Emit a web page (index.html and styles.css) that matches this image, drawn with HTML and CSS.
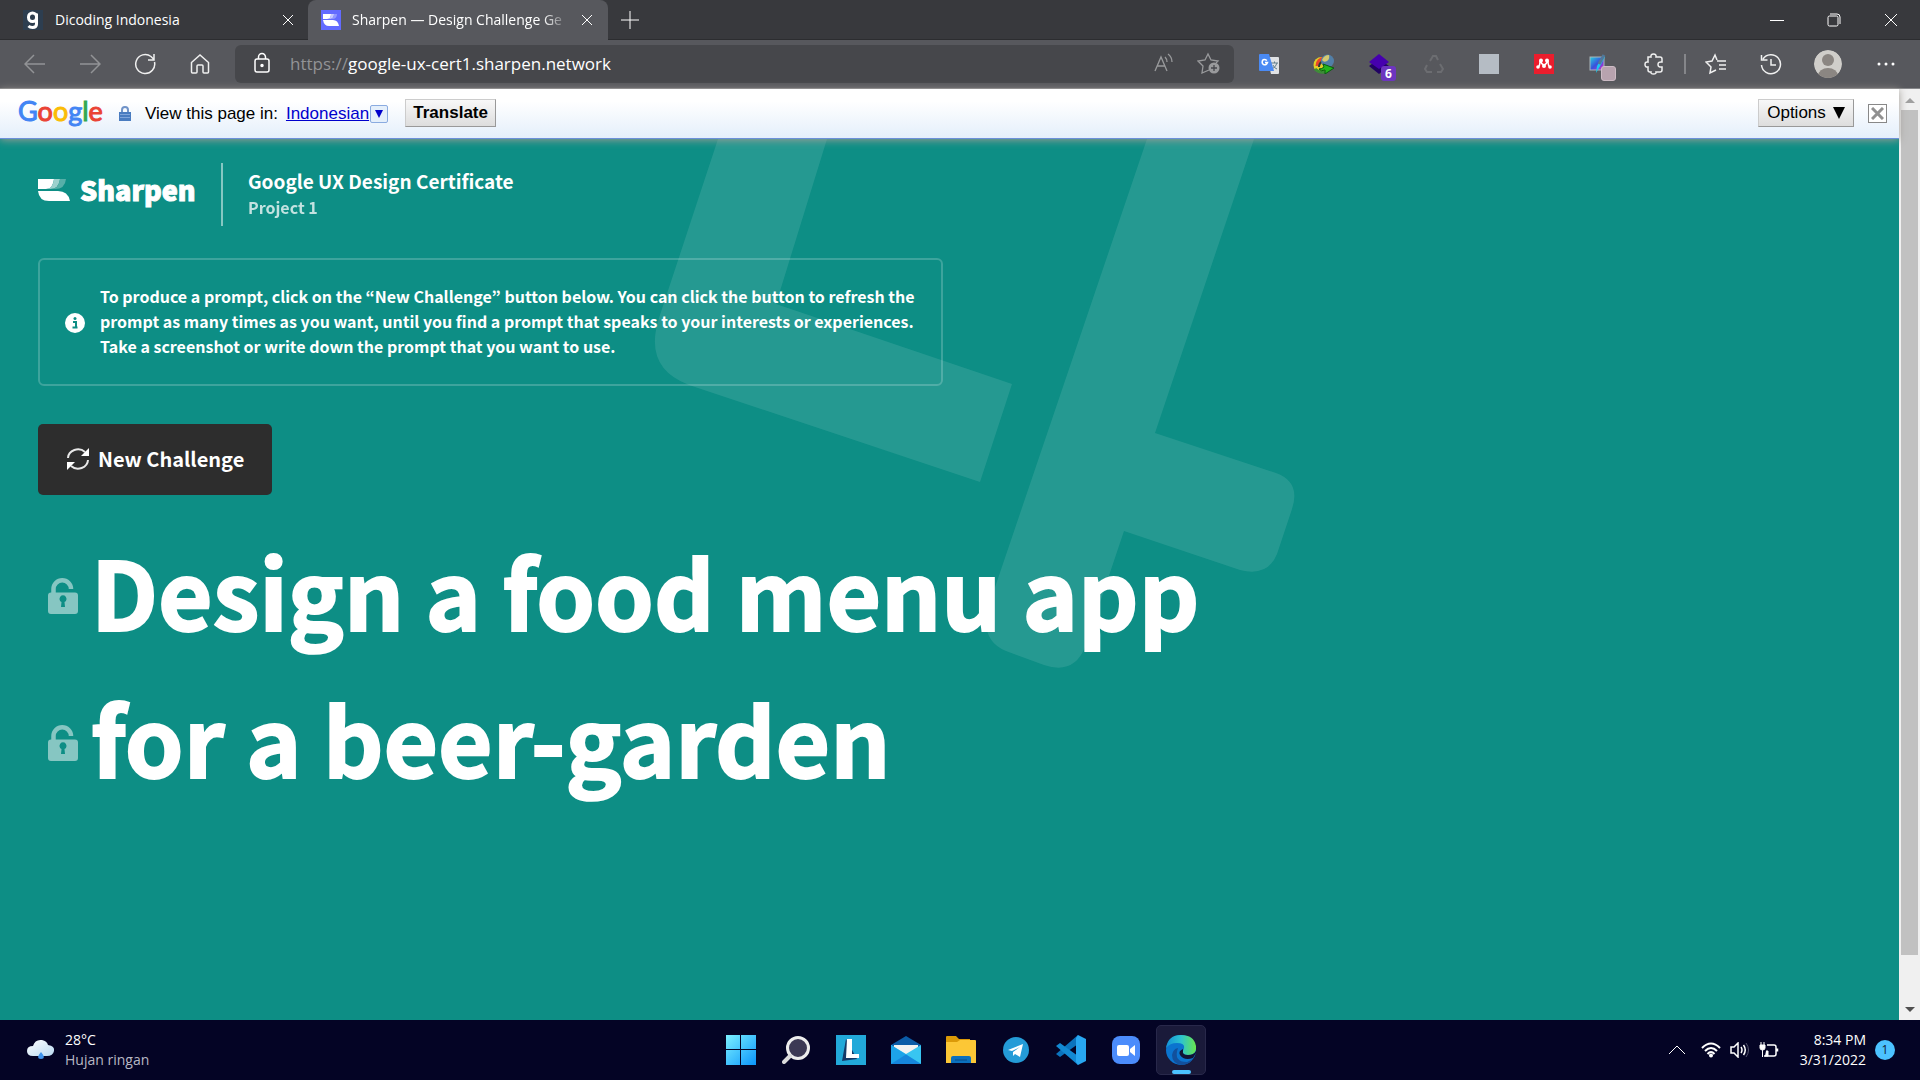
FILE: index.html
```html
<!DOCTYPE html>
<html lang="en">
<head>
<meta charset="utf-8">
<title>Sharpen — Design Challenge Generator</title>
<link rel="stylesheet" href="styles.css">
</head>
<body>
<div class="desktop">

  <header class="tabbar">
    <div class="tab">
      <svg class="favicon" viewBox="0 0 20 20" aria-hidden="true"><rect width="20" height="20" fill="#2d3e50"/><g fill="none" stroke="#fff" stroke-width="3"><rect x="5.500" y="3" width="8" height="8.500" rx="4"/><path d="M13.500 3.500v10.500q0 3.500-4 3.500-2.500 0-4-1.500"/></g></svg>
      <span class="tab-title">Dicoding Indonesia</span>
      <button class="tab-close" aria-label="Close tab"><svg width="12" height="12" viewBox="0 0 12 12"><path d="M1 1l10 10M11 1L1 11"/></svg></button>
    </div>
    <div class="tab tab-active">
      <svg class="favicon" viewBox="0 0 20 20" aria-hidden="true"><rect width="20" height="20" fill="#636bff"/><path d="M2 4h8q0 5-4 5H2z" fill="#fff"/><path d="M10 4h3q0 5-5 5H6q4 0 4-5z" fill="#c7caff"/><path d="M13 4h3q0 5-5 5H8q5 0 5-5z" fill="#9299ff"/><path d="M2 10h10q5 0 6 6H8q-5 0-6-6z" fill="#fff"/></svg>
      <span class="tab-title">Sharpen — Design Challenge Ge</span>
      <button class="tab-close" aria-label="Close tab"><svg width="12" height="12" viewBox="0 0 12 12"><path d="M1 1l10 10M11 1L1 11"/></svg></button>
    </div>
    <button class="new-tab" aria-label="New tab"><svg width="18" height="18" viewBox="0 0 18 18"><path d="M9 0v18M0 9h18"/></svg></button>
    <div class="window-controls">
      <button aria-label="Minimize"><svg width="14" height="14" viewBox="0 0 14 14"><path d="M0 7.500h14"/></svg></button>
      <button aria-label="Restore"><svg width="14" height="14" viewBox="0 0 14 14"><rect x="1" y="3" width="10" height="10" rx="1.500"/><path d="M3 1h7q3 0 3 3v7"/></svg></button>
      <button aria-label="Close"><svg width="14" height="14" viewBox="0 0 14 14"><path d="M1 1l12 12M13 1L1 13"/></svg></button>
    </div>
  </header>

  <nav class="toolbar" aria-label="Browser toolbar">
    <button class="tool dim" aria-label="Back"><svg width="22" height="20" viewBox="0 0 22 20" stroke-width="1.500"><path d="M21 10H1M10 1L1 10l9 9"/></svg></button>
    <button class="tool dim" aria-label="Forward"><svg width="22" height="20" viewBox="0 0 22 20" stroke-width="1.500"><path d="M1 10h20M12 1l9 9-9 9"/></svg></button>
    <button class="tool" aria-label="Refresh"><svg width="22" height="22" viewBox="0 0 22 22" stroke-width="1.500"><path d="M20.500 9a9.500 9.500 0 1 1-3.500-5.500L19.500 6M20 1v6h-6"/></svg></button>
    <button class="tool" aria-label="Home"><svg width="22" height="22" viewBox="0 0 22 22" stroke-width="1.500"><path d="M2.500 9.500L11 2l8.500 7.500V19q0 1-1 1H15q-1 0-1-1v-6q0-1-1-1H9q-1 0-1 1v6q0 1-1 1H3.500q-1 0-1-1z"/></svg></button>
    <form class="address">
      <svg class="address-lock" width="18" height="22" viewBox="0 0 18 22" stroke-width="1.500" aria-hidden="true"><rect x="2" y="7" width="14" height="13" rx="2"/><path d="M5.500 7V5a3.500 3.500 0 0 1 7 0v2"/><circle cx="9" cy="13.500" r="1" fill="#fff"/></svg>
      <label class="scheme" for="url">https://</label>
      <input class="url" id="url" type="text" value="google-ux-cert1.sharpen.network">
      <button class="address-btn" type="button" aria-label="Read aloud"><svg width="20" height="20" viewBox="0 0 20 20" stroke-width="1.300"><path d="M1 18L7 4l6 14M3.500 13h7M11 4q2 2 2 5M14 1q4 3 4 8"/></svg></button>
      <button class="address-btn" type="button" aria-label="Add to favorites"><svg width="24" height="22" viewBox="0 0 24 22" stroke-width="1.300"><path d="M12 18l-7 3 1-7-5-5 7-1 3-6 3 6 7 1-2 2"/><circle cx="17" cy="16" r="5.500" fill="#999a9c" stroke="none"/><path d="M17 13v6M14 16h6" stroke="#46474b"/></svg></button>
    </form>
    <button class="tool" aria-label="Google Translate"><svg width="20" height="20" viewBox="0 0 20 20"><path d="M8 3h11q1 0 1 1v15q0 1-1 1h-7z" fill="#e0e2e5" stroke="none"/><path d="M12 9h7M15.500 7.500V9M18 9q-1 4-5 6M14 11q1 3 4 4" stroke="#607d8b"/><path d="M1 0h9l5 17H1q-1 0-1-1V1q0-1 1-1z" fill="#4a8af4" stroke="none"/><path d="M8 6.500q-3-2-4.500 0-1 3 1 4 3 1 4-2H6" stroke="#fff" stroke-width="1.500"/></svg></button>
    <button class="tool" aria-label="Download manager"><svg width="22" height="20" viewBox="0 0 22 20"><circle cx="8.500" cy="11" r="8" fill="#e3ce25" stroke="none"/><path d="M4 12q0-7 8-8" stroke="#e9442c" stroke-width="3"/><path d="M6 13q0-4 4-6" stroke="#333" stroke-width="2"/><path d="M2 15q4 4 10 3" stroke="#3d8c38" stroke-width="3"/><circle cx="14.500" cy="7" r="6.500" fill="#527fa7" stroke="none"/><path d="M9 6q2-5 7-5 1 4-2 6t-5-1z" fill="#d4c970" stroke="none"/><path d="M10 10l11 4-9 6v-4q-4 2-6-1 3 0 5-2z" fill="#24b51b" stroke="#095d11"/></svg></button>
    <button class="tool" aria-label="Page layers, 6"><svg width="20" height="20" viewBox="0 0 20 20"><path d="M0 12l10-7 10 7-10 8z" fill="#210263" stroke="none"/><path d="M0 8l10-8 10 8-10 7z" fill="#4600ae" stroke="none"/></svg><span class="badge badge-purple">6</span></button>
    <button class="tool faint" aria-label="Recycle"><svg width="20" height="20" viewBox="0 0 20 20" stroke-width="2"><path d="M6 7l3-5h3l2 4M16 10l3 5-2 3h-4M8 18H3l-2-3 2-4"/></svg></button>
    <button class="tool" aria-label="Blank extension"><svg width="20" height="20" viewBox="0 0 20 20"><rect width="20" height="20" fill="#b5bcc4" stroke="none"/></svg></button>
    <button class="tool" aria-label="Mendeley"><svg width="20" height="20" viewBox="0 0 20 20"><rect width="20" height="20" fill="#eb1d2d" stroke="none"/><path d="M4 13q2-1 2-6M10 11q-3-1-3-4M10 11q3-1 3-4M14 7q0 5 2 6" stroke="#fff" stroke-width="1.500"/><g fill="#fff" stroke="none"><circle cx="7" cy="6.500" r="2"/><circle cx="13" cy="6.500" r="2"/><circle cx="4" cy="13" r="1.800"/><circle cx="10" cy="12" r="2"/><circle cx="16" cy="13" r="1.800"/></g></svg></button>
    <button class="tool" aria-label="Color picker"><svg width="20" height="20" viewBox="0 0 20 20"><defs><linearGradient id="swatch" x2="1" y2="1"><stop stop-color="#27d4df"/><stop offset=".5" stop-color="#3653dc"/><stop offset="1" stop-color="#e02bd0"/></linearGradient></defs><rect x="1" y="3" width="14" height="13" fill="url(#swatch)" stroke="#aab4ba"/><path d="M14 2l2 1-6 11-3 5 1-7z" fill="#17c9f3" stroke="none"/><path d="M15 1l-5 9" stroke="#51789a" stroke-width="3"/></svg><span class="badge badge-pink"></span></button>
    <button class="tool" aria-label="Extensions"><svg width="20" height="22" viewBox="0 0 20 22" stroke-width="1.500"><path d="M4 4h3q-.500-3 2.500-3T12 4h4q2 0 2 2v3q-4-.500-4 2.500t4 2.500v3q0 2-2 2h-4q.500 2-2.500 2T7 19H6q-2 0-2-2v-3q-3 .500-3-2.500T4 9z"/></svg></button>
    <span class="divider"></span>
    <button class="tool" aria-label="Favorites"><svg width="22" height="22" viewBox="0 0 22 22" stroke-width="1.500"><path d="M12 8h9M14 12h7M14 16h7M11 17l-6 3 1-6-5-5 6-1 3-6 2 5"/></svg></button>
    <button class="tool" aria-label="History"><svg width="22" height="22" viewBox="0 0 22 22" stroke-width="1.500"><path d="M3 6a9.500 9.500 0 1 1-1.500 6M1.500 2v5h6M11 6v6h5"/></svg></button>
    <button class="tool tool-wide" aria-label="Profile"><svg width="28" height="28" viewBox="0 0 28 28"><defs><clipPath id="face"><circle cx="14" cy="14" r="14"/></clipPath></defs><g clip-path="url(#face)" stroke="none"><circle cx="14" cy="14" r="14" fill="#d0ceca"/><circle cx="14" cy="10" r="6" fill="#8b8682"/><ellipse cx="14" cy="26" rx="10" ry="8" fill="#8b8682"/></g></svg></button>
    <button class="tool" aria-label="Settings and more"><svg width="18" height="4" viewBox="0 0 18 4"><g fill="#fff" stroke="none"><circle cx="2" cy="2" r="1.500"/><circle cx="9" cy="2" r="1.500"/><circle cx="16" cy="2" r="1.500"/></g></svg></button>
  </nav>

  <div class="viewport">
    <div class="document">
      <div class="translate">
        <span class="google" aria-label="Google"><span class="g-blue">G</span><span class="g-red">o</span><span class="g-yellow">o</span><span class="g-blue">g</span><span class="g-green">l</span><span class="g-red">e</span></span>
        <svg class="secure" width="12" height="16" viewBox="0 0 12 16" aria-hidden="true"><path d="M3 7V4a3 3 0 0 1 6 0v3" fill="none" stroke="#7093c8" stroke-width="2"/><path d="M0 6h12v9H0z" fill="#4a7cc0"/><path d="M1 8.500h10M1 11.500h10" stroke="#80a5da"/></svg>
        <span>View this page in:</span>
        <a class="language" href="#">Indonesian</a>
        <button class="language-menu" aria-label="Choose language"><svg width="8" height="8" viewBox="0 0 8 8"><path d="M0 0h8L4 8z" fill="#00c"/></svg></button>
        <button class="classic-btn translate-btn">Translate</button>
        <button class="classic-btn options-btn">Options <svg width="12" height="12" viewBox="0 0 12 12"><path d="M0 0h12L6 12z"/></svg></button>
        <button class="dismiss" aria-label="Close bar"><svg width="13" height="13" viewBox="0 0 13 13"><path d="M1 1l11 11M12 1L1 12" stroke="#909090" stroke-width="3"/></svg></button>
      </div>

      <main class="page">
        <svg class="pattern" width="650" height="532" viewBox="650 139 650 532" aria-hidden="true"><path d="M718 139L659 318Q643 368 689 385L980 482l32-98-236-80 51-165z"/><path d="M1147 139L988 608q-8 32 18 43l38 14q30 10 41-18l39-116 116 39q28 7 37-16l15-45q9-27-16-36l-121-40 99-294z"/></svg>
        <div class="content">
          <div class="brandbar">
            <a class="brand" href="#">
              <svg width="32" height="22" viewBox="0 0 32 22" aria-hidden="true"><path d="M0 0h16q-1 10-8 10H0z" fill="#fff"/><path d="M16 0h6q-1 10-10 10H8q7 0 8-10z" fill="#9dd1cd"/><path d="M22 0h6q-1 10-11 10h-5q9 0 10-10z" fill="#56afa8"/><path d="M0 12h20q10 0 12 10H11Q1 22 0 12z" fill="#fff"/></svg>
              <span>Sharpen</span>
            </a>
            <div class="course">
              <p class="course-name">Google UX Design Certificate</p>
              <p class="course-step">Project 1</p>
            </div>
          </div>
          <section class="notice">
            <svg width="20" height="20" viewBox="0 0 20 20" aria-hidden="true"><circle cx="10" cy="10" r="10" fill="#fff"/><path d="M8 9h3v5M7.500 14.500h5" fill="none" stroke="#0d8e85" stroke-width="2"/><circle cx="10" cy="5.500" r="1.500" fill="#0d8e85"/></svg>
            <p>To produce a prompt, click on the “New Challenge” button below. You can click the button to refresh the prompt as many times as you want, until you find a prompt that speaks to your interests or experiences. Take a screenshot or write down the prompt that you want to use.</p>
          </section>
          <button class="challenge">
            <svg width="24" height="24" viewBox="0 0 24 24" aria-hidden="true"><g fill="none" stroke="#e8e8e8" stroke-width="2"><path d="M2 11a10 9 0 0 1 17-6"/><path d="M22 13a10 9 0 0 1-17 6"/></g><path d="M23 1v8h-8zM1 23v-8h8z" fill="#fff"/></svg>
            <span>New Challenge</span>
          </button>
          <h1 class="prompt">
            <span class="prompt-line"><button class="lock" aria-label="Lock product"><svg width="30" height="36" viewBox="0 0 30 36"><path d="M5.500 16V11a8.500 8.500 0 0 1 17.500 0" fill="none" stroke="#86c6c2" stroke-width="4.500"/><path fill-rule="evenodd" d="M3 14.500h24q3 0 3 3V33q0 3-3 3H3q-3 0-3-3V17.500q0-3 3-3zM13 29h4l-.500-5a3.500 3.500 0 1 0-3 0z" fill="#86c6c2"/></svg></button><span class="prompt-text">Design a food menu app</span></span>
            <span class="prompt-line"><button class="lock" aria-label="Lock audience"><svg width="30" height="36" viewBox="0 0 30 36"><path d="M5.500 16V11a8.500 8.500 0 0 1 17.500 0" fill="none" stroke="#86c6c2" stroke-width="4.500"/><path fill-rule="evenodd" d="M3 14.500h24q3 0 3 3V33q0 3-3 3H3q-3 0-3-3V17.500q0-3 3-3zM13 29h4l-.500-5a3.500 3.500 0 1 0-3 0z" fill="#86c6c2"/></svg></button><span class="prompt-text">for a beer-garden</span></span>
          </h1>
        </div>
      </main>
    </div>
    <div class="scrollbar" aria-hidden="true">
      <svg width="10" height="5" viewBox="0 0 10 5"><path d="M0 5h10L5 0z" fill="#a0a0a0"/></svg>
      <div class="track"><div class="thumb"></div></div>
      <svg width="10" height="5" viewBox="0 0 10 5"><path d="M0 0h10L5 5z" fill="#505050"/></svg>
    </div>
  </div>

  <footer class="taskbar">
    <div class="weather">
      <svg width="28" height="22" viewBox="0 0 28 22" aria-hidden="true"><defs><linearGradient id="cloud" x2="1" y2="1"><stop stop-color="#fff"/><stop offset="1" stop-color="#b9daf1"/></linearGradient></defs><path d="M6 17q-6 0-6-5t6-5q2-7 9-6 5 1 6 5 7 1 6 6-1 5-7 5z" fill="url(#cloud)"/><path d="M14 13q-6 7 0 7t0-7z" fill="#3f94ed"/></svg>
      <div><p>28°C</p><p class="muted">Hujan ringan</p></div>
    </div>
    <div class="apps">
      <button aria-label="Start"><svg width="30" height="30" viewBox="0 0 30 30"><defs><linearGradient id="win" x2="1" y2="1"><stop stop-color="#7cf1ff"/><stop offset="1" stop-color="#0b95fb"/></linearGradient></defs><path d="M0 0h14v14H0zM15 0h15v14H15zM0 15h14v15H0zM15 15h15v15H15z" fill="url(#win)"/></svg></button>
      <button aria-label="Search"><svg width="28" height="28" viewBox="0 0 28 28"><circle cx="16" cy="12" r="10.500" fill="#3c3954" stroke="#ededed" stroke-width="3"/><path d="M8 20l-6 6" stroke="#dcdcdc" stroke-width="4" stroke-linecap="round"/></svg></button>
      <button aria-label="L app"><svg width="30" height="30" viewBox="0 0 30 30"><path d="M0 0h30v30H0z" fill="#22a9d9"/><path d="M10 4L6 26l15-2z" fill="#143a68"/><path d="M11 4h5v15h7v4H10z" fill="#fff"/></svg></button>
      <button aria-label="Mail"><svg width="30" height="28" viewBox="0 0 30 28"><path d="M0 9l15-9 15 9v6H0z" fill="#0b5ca8"/><path d="M3 9h24v9H3z" fill="#f2f2f2"/><path d="M0 9l15 9 15-9v19H0z" fill="#38c5f1"/><path d="M0 9l30 19H0z" fill="#1da3e9"/><path d="M15 18.500L30 28H0z" fill="#1686dc"/></svg></button>
      <button aria-label="File Explorer"><svg width="30" height="28" viewBox="0 0 30 28"><path d="M0 1q0-1 1-1h9l3 3h11v10H0z" fill="#db9a08"/><path d="M0 6h11l3-2h15q1 0 1 1v22H0z" fill="#fcc736"/><path d="M5 27v-5q0-2 2-2h16q2 0 2 2v5z" fill="#0b70be"/><path d="M9 24h12" stroke="#084a86"/></svg></button>
      <button aria-label="Telegram"><svg width="28" height="28" viewBox="0 0 28 28"><circle cx="14" cy="14" r="13" fill="#249bd7"/><path d="M6 14l15-6-3 13-5-3-2 2v-4l7-5-8 4z" fill="#fff"/></svg></button>
      <button aria-label="Visual Studio Code"><svg width="30" height="30" viewBox="0 0 30 30"><path d="M22 0v9L4 22l-4-3z" fill="#0b73bd"/><path d="M22 30v-9L4 8l-4 3z" fill="#1289d3"/><path d="M22 0l8 4v22l-8 4-2-3V3z" fill="#28a7f1"/></svg></button>
      <button aria-label="Zoom"><svg width="28" height="28" viewBox="0 0 28 28"><rect width="28" height="28" rx="8" fill="#4b8cfb"/><rect x="5" y="9" width="12" height="11" rx="2" fill="#fff"/><path d="M18 13l5-4v11l-5-4z" fill="#fff"/></svg></button>
      <button class="app-active" aria-label="Edge"><svg width="30" height="30" viewBox="0 0 30 30"><defs><linearGradient id="edge" x2="1"><stop stop-color="#1391d8"/><stop offset=".5" stop-color="#2dc3cf"/><stop offset="1" stop-color="#69e64c"/></linearGradient></defs><circle cx="15" cy="15" r="15" fill="#0b74cf"/><path d="M0 13Q2 0 15 0q13 0 15 11 1 9-8 9-6 0-5-4 4-8-6-8Q4 8 0 13z" fill="url(#edge)"/><path d="M12 13q-5 14 9 14l6-3q-4 6-12 6Q6 28 6 20q1-6 6-7z" fill="#12509c"/><path d="M17 14q-5 2-3 6 4 6 13 3l3-5V16q-2 4-8 4-6 0-5-4z" fill="#111333"/></svg></button>
    </div>
    <div class="tray">
      <svg width="18" height="10" viewBox="0 0 18 10" class="tray-icon"><path d="M1 9l8-8 8 8"/></svg>
      <svg width="20" height="16" viewBox="0 0 20 16" class="tray-icon tray-wifi"><path d="M1 6q9-9 18 0M4 9q6-6 12 0M6.500 12q3.500-4 7 0"/><circle cx="10" cy="13.500" r="1" fill="#fff"/></svg>
      <svg width="20" height="16" viewBox="0 0 20 16" class="tray-icon"><path d="M1 5h3l4-4v14l-4-4H1zM11 5q2 3 0 6M13.500 3q3.500 5 0 10" stroke-width="1.500"/><path d="M16 1q5 7 0 14" stroke="#555570"/></svg>
      <svg width="20" height="16" viewBox="0 0 20 16" class="tray-icon"><path d="M8 3h7q2 0 2 2v7q0 2-2 2H5M18.500 6.500v3" stroke-width="1.500"/><path d="M1 3h5v3q0 2-2.500 2T1 6zM2 0v3M5 0v3M3.500 8v7" fill="#fff"/><path d="M7 9h2v5H6" fill="#fff"/></svg>
      <div class="clock"><p>8:34 PM</p><p>3/31/2022</p></div>
      <span class="count">1</span>
    </div>
  </footer>
</div>
</body>
</html>
```
FILE: styles.css
```css
* { box-sizing: border-box; }
body, p, h1 { margin: 0; }
body { font-family: "Open Sans", "Noto Sans", sans-serif; color: #fff; }
button { margin: 0; padding: 0; border: 0; background: none; color: inherit; font: inherit; }
svg { flex: none; display: block; }
a { color: inherit; }

.desktop { display: flex; flex-direction: column; min-height: 100vh; }

/* Tabs */
.tabbar { display: flex; height: 40px; background: #38393d; box-shadow: inset 0 -1px #2c2d30; font-size: 14px; }
.tab { display: flex; align-items: center; width: 308px; padding: 0 13px 0 23px; gap: 12px; }
.tab-active { gap: 11px; width: 300px; padding: 0 14px 0 13px; border-radius: 8px 8px 0 0; background: #57585d; }
.favicon { width: 20px; height: 20px; }
.tab-title { flex: 1; overflow: hidden; white-space: nowrap; line-height: 20px; }
.tab-active .tab-title { -webkit-mask-image: linear-gradient(90deg, #000 88%, transparent); mask-image: linear-gradient(90deg, #000 88%, transparent); }
.tab-close, .new-tab, .window-controls button { display: grid; place-items: center; }
.tab-close { width: 14px; height: 20px; }
.new-tab { width: 44px; }
.tabbar button svg { fill: none; stroke: #fff; }
.window-controls { display: flex; margin: 0 1px 0 auto; }
.window-controls button { width: 57px; }

/* Toolbar */
.toolbar { display: flex; align-items: center; height: 49px; padding: 0 7px; background: #57585d; border-bottom: 1px solid #86878a; }
.tool { position: relative; display: grid; place-items: center; flex: none; width: 55px; height: 40px; }
.tool-wide { width: 60px; }
.tool svg { fill: none; stroke: #f0f0f0; }
.tool.dim svg { stroke: #929396; }
.tool.faint svg { stroke: #6c6d71; }
.badge { position: absolute; left: 30px; top: 22px; width: 15px; height: 15px; border-radius: 3px; font-size: 12px; font-weight: 700; line-height: 15px; text-align: center; }
.badge-purple { background: #6d35bf; }
.badge-pink { background: #b8a3af; border: 1px solid #cdbcc5; }
.divider { flex: none; width: 2px; height: 20px; margin: 0 2px 0 3px; background: #85868a; }
.address { display: flex; flex: 1; align-items: center; height: 38px; margin: 0 7px 0 8px; padding: 0 3px 2px 18px; border-radius: 6px; background: #46474b; font-size: 17px; }
.address svg { fill: none; stroke: #999a9c; }
.address .address-lock { margin-right: 19px; stroke: #fff; }
.scheme { color: #929396; }
.url { flex: 1; min-width: 0; padding: 0; border: 0; outline: 0; background: none; color: #fff; font: inherit; }
.address-btn { display: grid; place-items: center; width: 45px; height: 30px; }

/* Viewport */
.viewport { display: flex; flex: 1; }
.document { display: flex; flex: 1; flex-direction: column; min-width: 0; }
.scrollbar { display: flex; flex-direction: column; align-items: center; justify-content: space-between; width: 21px; padding: 9px 2px 8px; background: #f0f0f0; }
.track { flex: 1; align-self: stretch; margin: 7px 0; }
.thumb { height: calc(100% - 45px); background: #c1c1c1; }

/* Translate bar */
.translate { position: relative; z-index: 1; display: flex; align-items: center; height: 50px; padding: 0 12px 0 18px; background: linear-gradient(#fff 25%, #e4effb); border-bottom: 1px solid #6b90da; box-shadow: 0 1px 8px #a09c96; color: #000; font: 17px/20px "Liberation Sans", Arial, sans-serif; }
.google { width: 87px; padding-bottom: 6px; font: 27px/32px Lato, sans-serif; -webkit-text-stroke: 1px; }
.g-blue { color: #4285f4; } .g-red { color: #ea4335; } .g-yellow { color: #fbbc05; } .g-green { color: #34a853; }
.secure { margin: 0 14px 0 14px; }
.language { margin-left: 8px; color: #00c; }
.language-menu { display: grid; place-items: center; width: 18px; height: 18px; margin-left: 1px; border: 1px solid #8aabe0; border-radius: 2px; background: #e4effb; }
.classic-btn { display: flex; align-items: center; justify-content: center; gap: 7px; height: 28px; margin-bottom: 2px; border: 1px solid; border-color: #ccc #999 #999 #ccc; background: linear-gradient(#f8f8f8, #ddd); }
.translate-btn { width: 91px; margin-left: 17px; font-weight: 700; }
.options-btn { width: 96px; margin-left: auto; }
.dismiss { display: grid; place-items: center; width: 19px; height: 19px; margin-left: 14px; border: 1px solid #888; background: #fff; }

/* Sharpen page */
.page { position: relative; flex: 1; overflow: hidden; background: #0d8e85; font-family: "Noto Sans CJK KR", sans-serif; font-weight: 700; }
.pattern { position: absolute; left: 650px; top: 0; fill: rgba(255, 255, 255, .1); }
.content { position: relative; padding: 24px 38px; }
.brandbar { display: flex; align-items: center; margin-bottom: 32px; }
.brand { display: flex; align-items: center; gap: 10px; width: 183px; padding-bottom: 10px; color: #fff; font-size: 27px; font-weight: 900; line-height: 32px; text-decoration: none; -webkit-text-stroke: 1px; }
.course { padding: 5px 0 6px 25px; border-left: 2px solid rgba(255, 255, 255, .5); line-height: 26px; }
.course-name { font-size: 19px; }
.course-step { font-size: 16px; opacity: .75; }
.notice { display: flex; align-items: center; gap: 15px; max-width: 905px; padding: 24px 0 23px 25px; border: 2px solid rgba(255, 255, 255, .2); border-radius: 6px; font-size: 16px; line-height: 25px; }
.notice p { padding: 0 16px 2px 0; }
.challenge { display: flex; align-items: center; gap: 8px; height: 71px; margin-top: 38px; padding: 0 28px 2px; border-radius: 5px; background: #2d2d2d; font-size: 20px; }
.prompt { margin-top: 27px; font-size: 94px; line-height: 137px; }
.prompt-line { display: flex; align-items: center; white-space: nowrap; }
.prompt-text { padding-bottom: 10px; -webkit-text-stroke: 2px; }
.lock { margin: 0 13px 0 10px; }

/* Taskbar */
.taskbar { display: grid; grid-template-columns: 1fr auto 1fr; align-items: center; height: 60px; padding: 0 25px 0 27px; background: #040425; font-size: 14px; line-height: 20px; }
.weather, .apps, .tray { display: flex; align-items: center; }
.weather { gap: 10px; }
.muted { color: #b8b8c4; }
.apps { gap: 5px; }
.apps button { position: relative; display: grid; place-items: center; width: 50px; height: 50px; border-radius: 5px; }
.apps .app-active { background: #1a1a3a; border: 1px solid #28284a; }
.app-active::after { content: ""; position: absolute; bottom: 0; left: 15px; width: 19px; height: 4px; border-radius: 2px; background: #4cc2ff; }
.tray { justify-content: flex-end; gap: 9px; }
.tray-icon { fill: none; stroke: #fff; stroke-width: 1; }
.tray-wifi { margin-left: 6px; stroke-width: 2; }
.clock { margin-left: 8px; width: 70px; text-align: right; }
.count { width: 20px; height: 20px; border-radius: 10px; background: #4cc2ff; color: #123; font-size: 12px; text-align: center; }
```
